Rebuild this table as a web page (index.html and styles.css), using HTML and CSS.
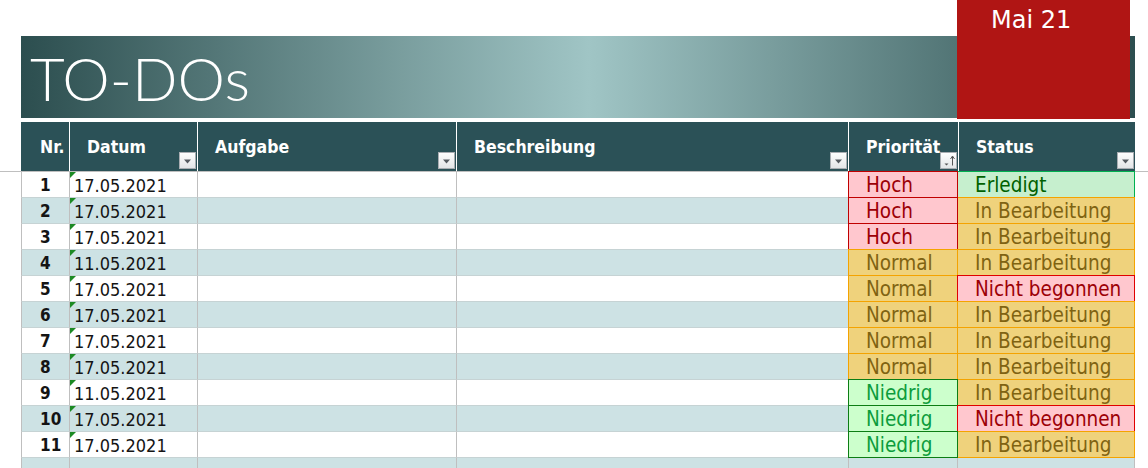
FILE: index.html
```html
<!DOCTYPE html>
<html lang="de">
<head>
<meta charset="utf-8">
<title>TO-DOs</title>
<link rel="stylesheet" href="styles.css">
</head>
<body>
<div class="sheet">
  <div class="title-band"><h1>TO-DOs</h1></div>
  <div class="month">Mai 21</div>

  <div class="head-line">
    <div class="cols head">
      <div class="th"><span>Nr.</span></div>
      <div class="th"><span>Datum</span><svg class="flt" viewBox="0 0 17 17"><use href="#filter"/></svg></div>
      <div class="th"><span>Aufgabe</span><svg class="flt" viewBox="0 0 17 17"><use href="#filter"/></svg></div>
      <div class="th"><span>Beschreibung</span><svg class="flt" viewBox="0 0 17 17"><use href="#filter"/></svg></div>
      <div class="th"><span>Priorität</span><svg class="flt" viewBox="0 0 17 17"><use href="#btn"/><path d="M4.5 11.5h4l-2 2z" fill="#555"/><path d="M12.5 13.5v-9" stroke="#555" stroke-width="1" fill="none"/><path d="M10.5 7l2-3 2 3" stroke="#555" stroke-width="1" fill="none"/></svg></div>
      <div class="th"><span>Status</span><svg class="flt" viewBox="0 0 17 17"><use href="#filter"/></svg></div>
    </div>
  </div>

  <div class="rows">
    <div class="cols row"><div class="td nr">1</div><div class="td dt">17.05.2021</div><div class="td"></div><div class="td"></div><div class="td pr hoch">Hoch</div><div class="td st done">Erledigt</div></div>
    <div class="cols row alt"><div class="td nr">2</div><div class="td dt">17.05.2021</div><div class="td"></div><div class="td"></div><div class="td pr hoch">Hoch</div><div class="td st prog">In Bearbeitung</div></div>
    <div class="cols row"><div class="td nr">3</div><div class="td dt">17.05.2021</div><div class="td"></div><div class="td"></div><div class="td pr hoch">Hoch</div><div class="td st prog">In Bearbeitung</div></div>
    <div class="cols row alt"><div class="td nr">4</div><div class="td dt">11.05.2021</div><div class="td"></div><div class="td"></div><div class="td pr norm">Normal</div><div class="td st prog">In Bearbeitung</div></div>
    <div class="cols row"><div class="td nr">5</div><div class="td dt">17.05.2021</div><div class="td"></div><div class="td"></div><div class="td pr norm">Normal</div><div class="td st open">Nicht begonnen</div></div>
    <div class="cols row alt"><div class="td nr">6</div><div class="td dt">17.05.2021</div><div class="td"></div><div class="td"></div><div class="td pr norm">Normal</div><div class="td st prog">In Bearbeitung</div></div>
    <div class="cols row"><div class="td nr">7</div><div class="td dt">17.05.2021</div><div class="td"></div><div class="td"></div><div class="td pr norm">Normal</div><div class="td st prog">In Bearbeitung</div></div>
    <div class="cols row alt"><div class="td nr">8</div><div class="td dt">17.05.2021</div><div class="td"></div><div class="td"></div><div class="td pr norm">Normal</div><div class="td st prog">In Bearbeitung</div></div>
    <div class="cols row"><div class="td nr">9</div><div class="td dt">11.05.2021</div><div class="td"></div><div class="td"></div><div class="td pr low">Niedrig</div><div class="td st prog">In Bearbeitung</div></div>
    <div class="cols row alt"><div class="td nr">10</div><div class="td dt">17.05.2021</div><div class="td"></div><div class="td"></div><div class="td pr low">Niedrig</div><div class="td st open">Nicht begonnen</div></div>
    <div class="cols row"><div class="td nr">11</div><div class="td dt">17.05.2021</div><div class="td"></div><div class="td"></div><div class="td pr low">Niedrig</div><div class="td st prog">In Bearbeitung</div></div>
    <div class="cols row alt"><div class="td nr"></div><div class="td"></div><div class="td"></div><div class="td"></div><div class="td pr"></div><div class="td st"></div></div>
  </div>
</div>

<svg width="0" height="0" class="defs" aria-hidden="true">
  <defs>
    <linearGradient id="btng" x1="0" y1="0" x2="0" y2="1">
      <stop offset="0" stop-color="#ffffff"/>
      <stop offset="1" stop-color="#e2e4e6"/>
    </linearGradient>
    <symbol id="btn" viewBox="0 0 17 17">
      <rect x="0.5" y="0.5" width="16" height="16" fill="url(#btng)" stroke="#a9adb2"/>
    </symbol>
    <symbol id="filter" viewBox="0 0 17 17">
      <use href="#btn"/>
      <path d="M5 7.5h7l-3.5 4z" fill="#555a60"/>
    </symbol>
  </defs>
</svg>
</body>
</html>
```

FILE: styles.css
```css
html, body {
  margin: 0;
  background: #ffffff;
}

body {
  font-family: "DejaVu Sans", "Noto Sans", sans-serif;
  color: #141414;
}

.defs {
  position: absolute;
  width: 0;
  height: 0;
}

.sheet {
  position: relative;
  width: 1148px;
  height: 468px;
  overflow: hidden;
}

.title-band {
  box-sizing: border-box;
  margin: 36px 13px 0 21px;
  height: 82px;
  padding: 2px 0 0 9px;
  background: linear-gradient(90deg, #2c4e4f 0%, #a0c5c5 51%, #2c4e4f 100%);
}

.title-band h1 {
  margin: 0;
  font-family: Lato, "DejaVu Sans", sans-serif;
  font-weight: 300;
  font-size: 60px;
  line-height: 80px;
  color: #ffffff;
}

.month {
  position: absolute;
  left: 957px;
  top: 0;
  width: 173px;
  height: 119px;
  box-sizing: border-box;
  padding: 5px 0 0 34px;
  background: #b01514;
  color: #ffffff;
  font-size: 24px;
  line-height: 30px;
}

.head-line {
  margin-top: 4px;
  border-bottom: 1px solid #bfbfbf;
}

.cols {
  display: grid;
  grid-template-columns: 48px 128px 259px 392px 110px 177px;
  width: 1114px;
  margin-left: 21px;
}

.head {
  height: 49px;
  background: #2b5157;
}

.th {
  display: flex;
  justify-content: space-between;
  border-left: 1px solid #ffffff;
  padding-left: 17px;
  color: #ffffff;
  font-weight: 700;
  font-stretch: condensed;
  font-size: 17.5px;
}

.th:first-child {
  border-left-color: #2b5157;
  padding-left: 18px;
}

.th span {
  padding-top: 14px;
  line-height: 22px;
}

.flt {
  align-self: flex-end;
  flex: none;
  width: 17px;
  height: 17px;
  margin: 0 1px 2px 0;
}

.row {
  height: 26px;
}

.row.alt {
  background: #cde2e4;
}

.td {
  box-sizing: border-box;
  height: 26px;
  border-left: 1px solid #bfbfbf;
  border-bottom: 1px solid #c6d3d4;
  white-space: nowrap;
  font-stretch: condensed;
}

.nr {
  padding: 2px 0 0 18px;
  font-weight: 700;
  font-size: 17px;
  line-height: 23px;
}

.dt {
  position: relative;
  padding: 2px 0 0 4px;
  font-size: 18px;
  line-height: 23px;
}

.dt::before {
  content: "";
  position: absolute;
  left: 0;
  top: 0;
  border-top: 6px solid #1c8a24;
  border-right: 6px solid transparent;
}

.pr {
  border-right: 1px solid #bfbfbf;
  padding-left: 17px;
  font-size: 20.5px;
  line-height: 26px;
}

.st {
  border-left: none;
  border-right: 1px solid #bfbfbf;
  padding-left: 17px;
  font-size: 20.5px;
  line-height: 26px;
}

.hoch {
  background: #ffc7ce;
  color: #9c0006;
  border-color: #c00000;
  box-shadow: 0 -1px 0 #c00000;
}

.norm,
.prog {
  background: #efd27c;
  color: #7f6312;
  border-color: #f4a300;
  box-shadow: 0 -1px 0 #f4a300;
}

.low {
  background: #ccffcc;
  color: #0c9c3c;
  border-color: #0c7d14;
  box-shadow: 0 -1px 0 #0c7d14;
}

.done {
  background: #c6efce;
  color: #006100;
  border-color: #00b050;
  box-shadow: 0 -1px 0 #00b050;
}

.open {
  background: #ffc7ce;
  color: #9c0006;
  border-color: #e00000;
  box-shadow: 0 -1px 0 #e00000, -1px 0 0 #e00000, -1px -1px 0 #e00000;
}
```
